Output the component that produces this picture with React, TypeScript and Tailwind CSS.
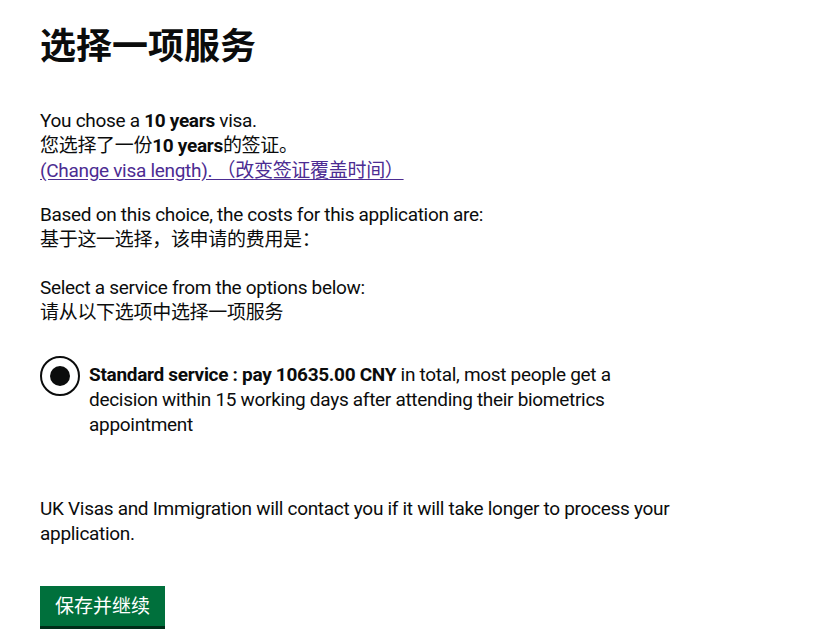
export default function App() {
  return (
    <div
      className="min-h-screen bg-white px-10 pt-[22px] text-[19px] leading-[25px] tracking-[-0.3px] text-[#0b0c0c]"
      style={{ fontFamily: 'Roboto, "Noto Sans CJK SC", sans-serif' }}
    >
      <h1 className="mb-[36px] text-[36px] font-bold leading-[50px] tracking-normal">选择一项服务</h1>

      <p className="mb-[19px]">
        You chose a <strong className="font-bold">10 years</strong> visa.
        <br />
        您选择了一份<strong className="font-bold">10 years</strong>的签证。
        <br />
        <a href="#" className="text-[#4c2c92] underline underline-offset-2">
          (Change visa length). （改变签证覆盖时间）
        </a>
      </p>

      <p className="mb-[23px]">
        Based on this choice, the costs for this application are:
        <br />
        基于这一选择，该申请的费用是：
      </p>

      <p className="mb-[37px]">
        Select a service from the options below:
        <br />
        请从以下选项中选择一项服务
      </p>

      <div className="mb-[59px] flex items-start gap-[9px]">
        <div className="mt-[-6px] flex h-10 w-10 shrink-0 items-center justify-center rounded-full border-2 border-[#0b0c0c]">
          <div className="h-5 w-5 rounded-full bg-[#0b0c0c]" />
        </div>
        <label className="max-w-[545px]">
          <strong className="font-bold">Standard service : pay 10635.00 CNY</strong> in total, most people get a
          decision within 15 working days after attending their biometrics appointment
        </label>
      </div>

      <p className="mb-[40px] max-w-[630px]">
        UK Visas and Immigration will contact you if it will take longer to process your application.
      </p>

      <button className="bg-[#00703c] px-[15px] pb-[7px] pt-[8px] text-[19px] leading-[25px] tracking-normal text-white shadow-[0_3px_0_#002d18]">
        保存并继续
      </button>
    </div>
  );
}
